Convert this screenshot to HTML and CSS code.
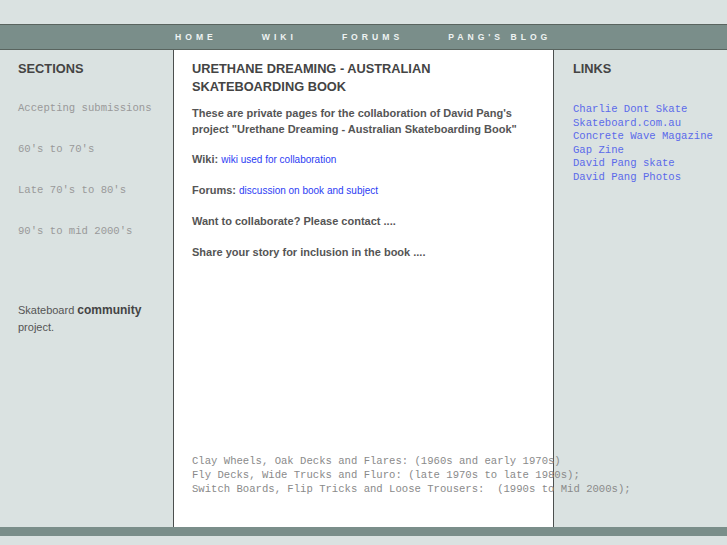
FILE: index.html
```html
<!DOCTYPE html>
<html>
<head>
<meta charset="utf-8">
<title>Urethane Dreaming</title>
<link rel="stylesheet" href="styles.css">
</head>
<body>
<div class="top"></div>
<nav class="nav">
  <a href="#">HOME</a>
  <a href="#">WIKI</a>
  <a href="#">FORUMS</a>
  <a href="#">PANG'S BLOG</a>
</nav>
<div class="main">
  <aside class="left">
    <h2 class="side-title">SECTIONS</h2>
    <ul class="sections">
      <li>Accepting submissions</li>
      <li>60's to 70's</li>
      <li>Late 70's to 80's</li>
      <li>90's to mid 2000's</li>
    </ul>
    <p class="community">Skateboard <b>community</b><br>project.</p>
  </aside>
  <section class="center">
    <h1 class="title">URETHANE DREAMING - AUSTRALIAN SKATEBOARDING BOOK</h1>
    <p class="intro">These are private pages for the collaboration of David Pang's project "Urethane Dreaming - Australian Skateboarding Book"</p>
    <p class="row row-first"><b>Wiki:</b> <a href="#">wiki used for collaboration</a></p>
    <p class="row"><b>Forums:</b> <a href="#">discussion on book and subject</a></p>
    <p class="row"><b>Want to collaborate? Please contact ....</b></p>
    <p class="row"><b>Share your story for inclusion in the book ....</b></p>
    <pre class="eras">Clay Wheels, Oak Decks and Flares: (1960s and early 1970s)
Fly Decks, Wide Trucks and Fluro: (late 1970s to late 1980s);
Switch Boards, Flip Tricks and Loose Trousers:  (1990s to Mid 2000s);</pre>
  </section>
  <aside class="right">
    <h2 class="side-title">LINKS</h2>
    <ul class="links">
      <li><a href="#">Charlie Dont Skate</a></li>
      <li><a href="#">Skateboard.com.au</a></li>
      <li><a href="#">Concrete Wave Magazine</a></li>
      <li><a href="#">Gap Zine</a></li>
      <li><a href="#">David Pang skate</a></li>
      <li><a href="#">David Pang Photos</a></li>
    </ul>
  </aside>
</div>
<div class="footer"></div>
</body>
</html>
```

FILE: styles.css
```css
html, body {
  margin: 0;
  padding: 0;
}
body {
  background: #dae2e1;
  font-family: "Liberation Sans", Arial, sans-serif;
  color: #555;
  height: 545px;
  overflow: hidden;
}
.top {
  height: 24px;
}
.nav {
  height: 24px;
  background: #7a8e8a;
  border-top: 1px solid #59645f;
  border-bottom: 1px solid #59645f;
  display: flex;
  align-items: center;
  padding-left: 175px;
  gap: 45px;
  box-sizing: content-box;
}
.nav a {
  color: #eef3f2;
  text-decoration: none;
  font-size: 8.6px;
  font-weight: bold;
  letter-spacing: 4px;
  line-height: 24px;
}
.main {
  display: grid;
  grid-template-columns: 173px 381px 173px;
  height: 477px;
}
.left, .right {
  padding-top: 11px;
}
.left {
  padding-left: 18px;
}
.right {
  padding-left: 19px;
}
.side-title {
  margin: 0;
  font-size: 12.8px;
  font-weight: bold;
  color: #444;
  line-height: 16px;
}
.sections {
  list-style: none;
  margin: 24px 0 0;
  padding: 0;
  font-family: "Liberation Mono", "Courier New", monospace;
  font-size: 10.6px;
  color: #999;
}
.sections li {
  line-height: 14px;
  margin-bottom: 27px;
}
.community {
  margin: 64px 0 0;
  font-size: 11px;
  line-height: 17px;
  color: #555;
}
.community b {
  font-size: 12px;
  color: #444;
}
.center {
  background: #fff;
  border-left: 1px solid #4b4f4e;
  border-right: 1px solid #4b4f4e;
  padding: 10px 28px 31px 18px;
  display: flex;
  flex-direction: column;
  min-width: 0;
}
.title {
  margin: 0;
  font-size: 12.8px;
  line-height: 18px;
  color: #444;
  font-weight: bold;
}
.intro {
  margin: 9px 0 0;
  font-size: 11px;
  font-weight: bold;
  line-height: 16px;
  color: #555;
}
.row {
  margin: 15px 0 0;
  font-size: 11px;
  line-height: 16px;
  height: 16px;
  color: #555;
}
.row-first {
  margin-top: 14px;
}
.row a {
  color: #2b3cf4;
  text-decoration: none;
  font-size: 10px;
  line-height: 10px;
}
.eras {
  margin: auto 0 0;
  font-family: "Liberation Mono", "Courier New", monospace;
  font-size: 10.6px;
  line-height: 14px;
  color: #8a8a8a;
  white-space: pre;
  overflow: visible;
}
.links {
  list-style: none;
  margin: 26px 0 0;
  padding: 0;
  font-family: "Liberation Mono", "Courier New", monospace;
  font-size: 10.6px;
  line-height: 13.6px;
}
.links a {
  color: #5a6aea;
  text-decoration: none;
}
.footer {
  height: 9px;
  background: #7a8e8a;
}
```
